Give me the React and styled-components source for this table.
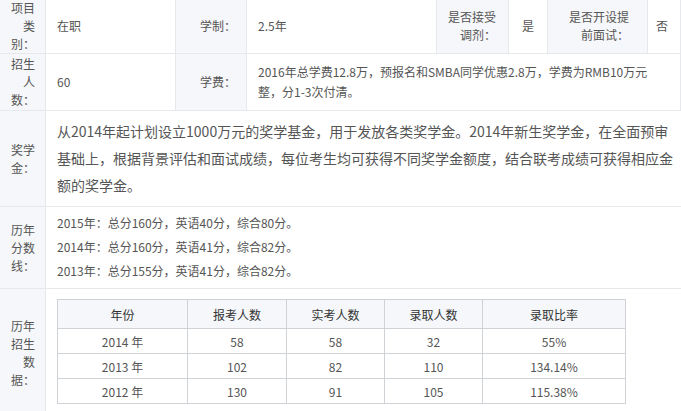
import React from 'react';
import styled, { createGlobalStyle } from 'styled-components';

const GlobalStyle = createGlobalStyle`
  html, body {
    margin: 0;
    padding: 0;
    background: #fff;
  }
  body {
    font-family: "Noto Sans CJK SC", "Microsoft YaHei", sans-serif;
    color: #555;
  }
`;

const Sheet = styled.div`
  width: 681px;
  margin-top: -1px;
  font-size: 12px;
`;

const Row = styled.div`
  display: grid;
  grid-template-columns: ${({ $cols }) => $cols || '46px 1fr'};
  border-bottom: 1px solid #e6e8ec;
`;

const Label = styled.div`
  background: #f5f7fa;
  border-right: 1px solid #e6e8ec;
  display: flex;
  align-items: center;
  justify-content: flex-end;
  text-align: right;
  line-height: 18px;
  padding: ${({ $pad }) => $pad || '1px 10px'};
  color: #555;
  box-sizing: border-box;
`;

const Value = styled.div`
  display: flex;
  align-items: center;
  justify-content: ${({ $center }) => ($center ? 'center' : 'flex-start')};
  padding: ${({ $pad }) => $pad || '0 11px'};
  border-right: 1px solid #e6e8ec;
  line-height: 20px;
  color: #555;
  box-sizing: border-box;
`;

const Prose = styled.div`
  font-size: 14px;
  line-height: 27px;
  padding: 7px 0 7px 11px;
  color: #555;
`;

const Lines = styled.div`
  line-height: 24px;
  padding: 4px 11px 5px;
  color: #555;
`;

const TableCell = styled.div`
  padding: 10px 11px 12px;
`;

const DataTable = styled.table`
  border-collapse: collapse;
  width: 568px;
  table-layout: fixed;
  font-size: 12px;
`;

const Th = styled.th`
  height: 28px;
  border: 1px solid #cfd2d6;
  background: #f5f7fa;
  color: #333;
  font-weight: 400;
  text-align: center;
  padding: 0;
`;

const Td = styled.td`
  height: 24px;
  border: 1px solid #cfd2d6;
  color: #555;
  text-align: center;
  padding: 0;
`;

const colWidths = [130, 99, 98, 98, 143];
const headers = ['年份', '报考人数', '实考人数', '录取人数', '录取比率'];
const stats = [
  ['2014 年', '58', '58', '32', '55%'],
  ['2013 年', '102', '82', '110', '134.14%'],
  ['2012 年', '130', '91', '105', '115.38%'],
];

export default function App() {
  return (
    <>
      <GlobalStyle />
      <Sheet>
        <Row $cols="46px 130px 71px 190px 72px 39px 100px 1fr">
          <Label $pad="0 10px"><span>项目类别：</span></Label>
          <Value>在职</Value>
          <Label $pad="0 10px"><span>学制：</span></Label>
          <Value>2.5年</Value>
          <Label $pad="0 12px 0 6px"><span>是否接受调剂：</span></Label>
          <Value $center $pad="0">是</Value>
          <Label $pad="0 18px 0 14px"><span>是否开设提前面试：</span></Label>
          <Value $center $pad="0 4px 0 0">否</Value>
        </Row>
        <Row $cols="46px 130px 71px 1fr">
          <Label><span>招生人数：</span></Label>
          <Value>60</Value>
          <Label $pad="1px 10px"><span>学费：</span></Label>
          <Value $pad="0 14px 0 11px">
            <span>2016年总学费12.8万，预报名和SMBA同学优惠2.8万，学费为RMB10万元整，分1-3次付清。</span>
          </Value>
        </Row>
        <Row>
          <Label><span>奖学金：</span></Label>
          <Prose>
            从2014年起计划设立1000万元的奖学基金，用于发放各类奖学金。2014年新生奖学金，在全面预审基础上，根据背景评估和面试成绩，每位考生均可获得不同奖学金额度，结合联考成绩可获得相应金额的奖学金。
          </Prose>
        </Row>
        <Row>
          <Label><span>历年分数线：</span></Label>
          <Lines>
            <div>2015年：总分160分，英语40分，综合80分。</div>
            <div>2014年：总分160分，英语41分，综合82分。</div>
            <div>2013年：总分155分，英语41分，综合82分。</div>
          </Lines>
        </Row>
        <Row>
          <Label><span>历年招生数据：</span></Label>
          <TableCell>
            <DataTable>
              <colgroup>
                {colWidths.map((w, i) => (
                  <col key={i} style={{ width: w }} />
                ))}
              </colgroup>
              <thead>
                <tr>
                  {headers.map((h) => (
                    <Th key={h}>{h}</Th>
                  ))}
                </tr>
              </thead>
              <tbody>
                {stats.map((r) => (
                  <tr key={r[0]}>
                    {r.map((c, i) => (
                      <Td key={i}>{c}</Td>
                    ))}
                  </tr>
                ))}
              </tbody>
            </DataTable>
          </TableCell>
        </Row>
      </Sheet>
    </>
  );
}
